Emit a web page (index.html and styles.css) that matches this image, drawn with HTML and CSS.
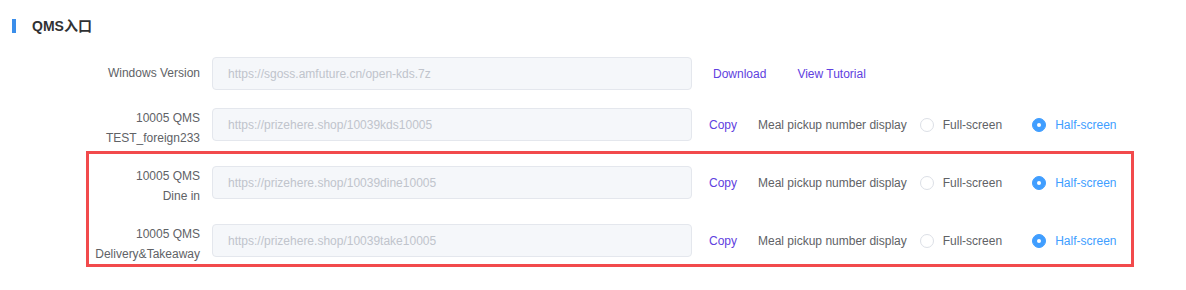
FILE: index.html
```html
<!DOCTYPE html>
<html lang="zh">
<head>
    <meta charset="UTF-8">
    <title>QMS入口</title>
    <link rel="stylesheet" href="styles.css">
</head>
<body>

    <div class="section-title">
        <span class="bar"></span>
        <h3>QMS入口</h3>
    </div>

    <div class="group first">
        <div class="row">
            <div class="label single">Windows Version</div>
            <input class="url" type="text" value="https://sgoss.amfuture.cn/open-kds.7z" disabled>
            <div class="actions links">
                <a class="link" href="#">Download</a>
                <a class="link" href="#">View Tutorial</a>
            </div>
        </div>
        <div class="row">
            <div class="label">10005 QMS<br>TEST_foreign233</div>
            <input class="url" type="text" value="https://prizehere.shop/10039kds10005" disabled>
            <div class="actions">
                <a class="link" href="#">Copy</a>
                <span class="caption">Meal pickup number display</span>
                <label class="radio"><span class="dot"></span>Full-screen</label>
                <label class="radio checked"><span class="dot"></span>Half-screen</label>
            </div>
        </div>
    </div>

    <!-- filas marcadas -->
    <div class="group marked">
        <div class="row">
            <div class="label">10005 QMS<br>Dine in</div>
            <input class="url" type="text" value="https://prizehere.shop/10039dine10005" disabled>
            <div class="actions">
                <a class="link" href="#">Copy</a>
                <span class="caption">Meal pickup number display</span>
                <label class="radio"><span class="dot"></span>Full-screen</label>
                <label class="radio checked"><span class="dot"></span>Half-screen</label>
            </div>
        </div>
        <div class="row">
            <div class="label">10005 QMS<br>Delivery&amp;Takeaway</div>
            <input class="url" type="text" value="https://prizehere.shop/10039take10005" disabled>
            <div class="actions">
                <a class="link" href="#">Copy</a>
                <span class="caption">Meal pickup number display</span>
                <label class="radio"><span class="dot"></span>Full-screen</label>
                <label class="radio checked"><span class="dot"></span>Half-screen</label>
            </div>
        </div>
    </div>

</body>
</html>
```

FILE: styles.css
```css
body {
    margin: 0;
    font-family: "Liberation Sans", Arial, "Noto Sans CJK SC", sans-serif;
    font-size: 12px;
    color: #606266;
    background: #fff;
}
.section-title {
    display: flex;
    align-items: center;
    height: 14px;
    margin: 19px 0 0 12px;
}
.section-title .bar {
    width: 4px;
    height: 14px;
    background: #3b8eea;
}
.section-title h3 {
    margin: 0 0 0 16px;
    font-size: 14px;
    font-weight: bold;
    color: #303133;
    line-height: 14px;
}
.group {
    box-sizing: border-box;
    width: 1048px;
    margin-left: 86px;
    border: 3px solid transparent;
}
.group.first {
    margin-top: 21px;
}
.group.marked {
    border-color: #f24a4c;
    padding-top: 12px;
}
.row {
    display: flex;
    align-items: flex-start;
    margin-bottom: 18px;
}
.row:last-child {
    margin-bottom: 0;
}
.label {
    box-sizing: border-box;
    width: 123px;
    padding-right: 12px;
    text-align: right;
    line-height: 20px;
    white-space: nowrap;
}
.label.single {
    line-height: 33px;
}
.url {
    box-sizing: border-box;
    width: 480px;
    height: 33px;
    padding: 0 15px;
    border: 1px solid #e4e7ed;
    border-radius: 4px;
    background: #f5f7fa;
    color: #c0c4cc;
    font-family: inherit;
    font-size: 12px;
    outline: none;
}
.actions {
    display: flex;
    align-items: center;
    height: 33px;
    margin-left: 17px;
}
.actions.links {
    margin-left: 21px;
    gap: 31px;
}
.link {
    color: #6041e0;
    text-decoration: none;
}
.caption {
    margin-left: 21px;
}
.radio {
    display: flex;
    align-items: center;
    margin-left: 13px;
    cursor: pointer;
}
.radio + .radio {
    margin-left: 30px;
}
.radio .dot {
    box-sizing: border-box;
    width: 14px;
    height: 14px;
    margin-right: 9px;
    border: 1px solid #dcdfe6;
    border-radius: 50%;
    background: #fff;
}
.radio.checked {
    color: #409eff;
}
.radio.checked .dot {
    border-color: #409eff;
    background: #409eff;
    position: relative;
}
.radio.checked .dot::after {
    content: "";
    position: absolute;
    left: 4px;
    top: 4px;
    width: 4px;
    height: 4px;
    border-radius: 50%;
    background: #fff;
}
```
